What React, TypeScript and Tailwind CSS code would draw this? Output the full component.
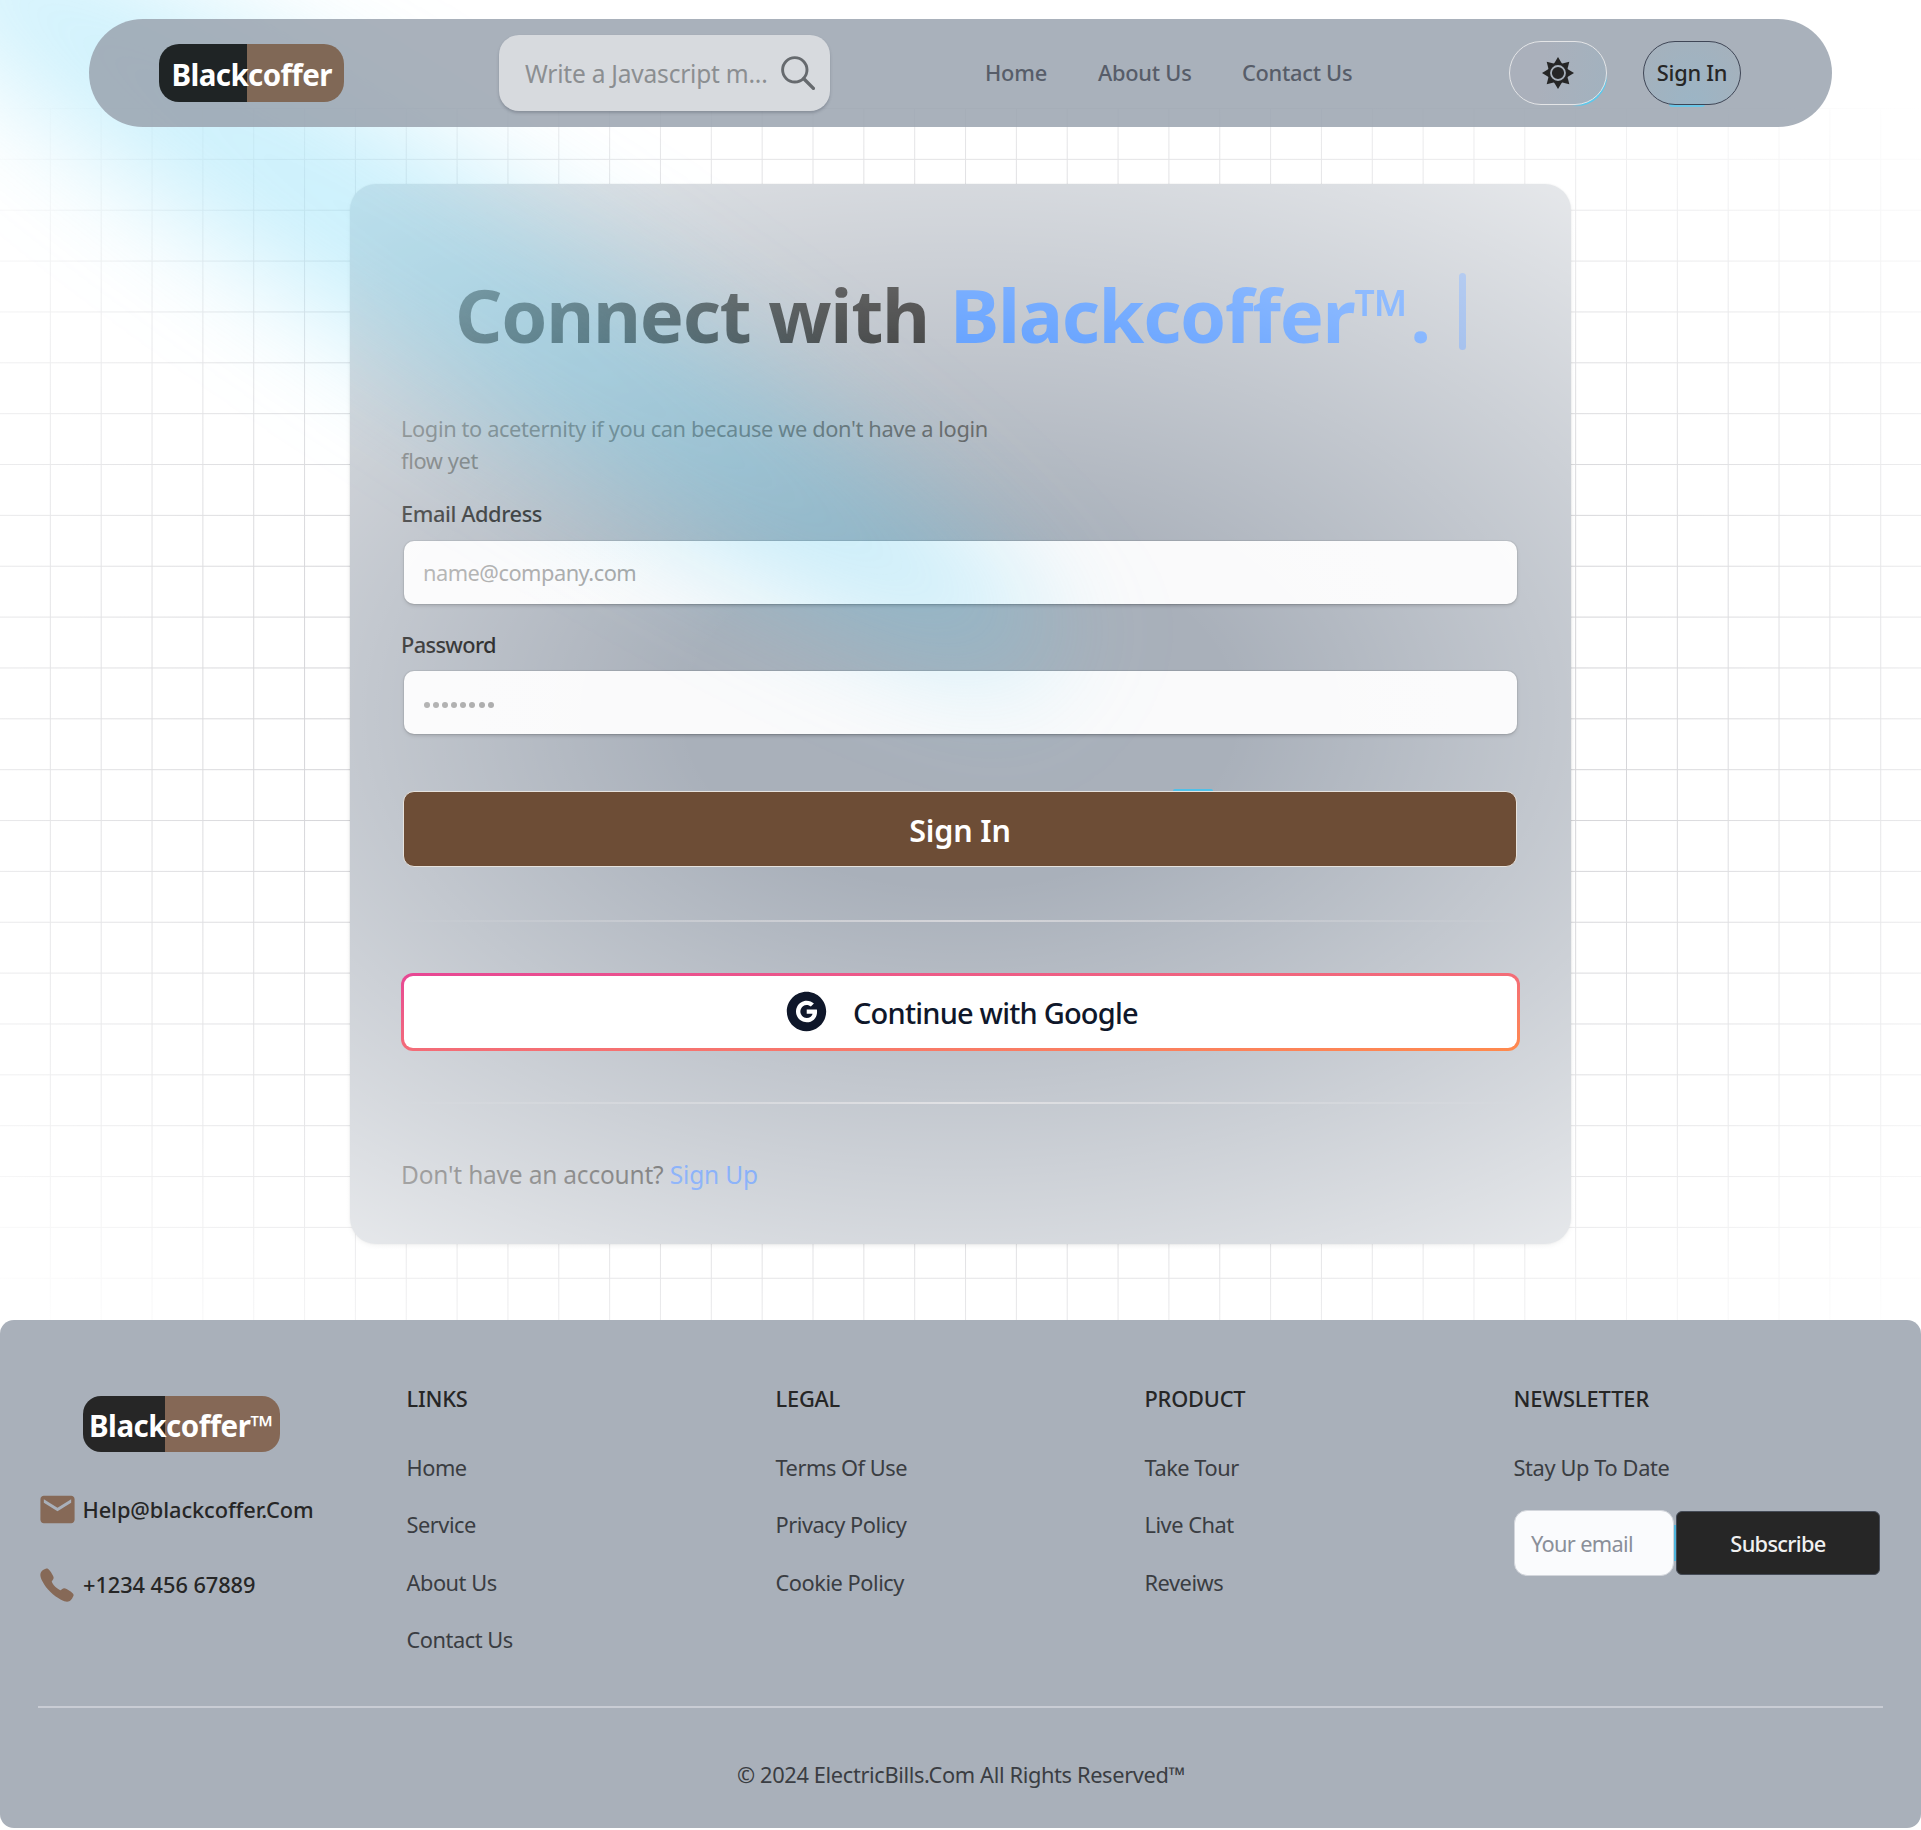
import React from "react";
import { AiFillGoogleCircle } from "react-icons/ai";
import { IoCall } from "react-icons/io5";
import { MdEmail } from "react-icons/md";

const SearchIcon = () => (
  <svg viewBox="0 0 34 34" className="h-[34px] w-[34px] shrink-0" fill="none" stroke="#666a6e">
    <circle cx="13.8" cy="13.8" r="12.2" strokeWidth="2.9" />
    <path d="M22.8 22.8 32.4 32.4" strokeWidth="3.4" strokeLinecap="round" />
  </svg>
);

const SunIcon = () => (
  <svg viewBox="-16 -16 32 32" className="h-8 w-8" fill="#262626">
    {[0, 45, 90, 135, 180, 225, 270, 315].map((a) => (
      <path key={a} d="M-4.2 -9 0 -16 4.2 -9z" transform={`rotate(${a})`} />
    ))}
    <circle r="10.2" />
    <circle r="7" fill="none" stroke="#a7b0ba" strokeWidth="1.8" />
  </svg>
);

const Navbar = () => (
  <nav className="relative z-30 mx-[89px] mt-[19px] flex h-[108px] items-center rounded-full bg-[#9aa3af]/85">
    <div className="ml-[70px] h-[58px] w-[185px] rounded-[20px] bg-[linear-gradient(90deg,#1f2425_88px,#806856_88px)] pt-[2px] pl-[12.5px] text-[29.5px] leading-[58px] font-bold tracking-[-0.6px] text-white">
      Blackcoffer
    </div>
    <div className="ml-[155px] flex h-[76px] w-[331px] items-center rounded-[20px] bg-[#d7dade] pl-[26px] shadow-[0_2px_3px_rgba(60,66,80,0.3)]">
      <span className="w-[256px] pt-[2px] text-[24.5px] tracking-[-0.22px] whitespace-nowrap text-[#8b8e91]">Write a Javascript m...</span>
      <SearchIcon />
    </div>
    <div className="ml-[155px] flex pt-px text-[21.8px] font-medium text-[#575d69]">
      <a className="w-[113px] tracking-[-0.2px]">Home</a>
      <a className="w-[144px] tracking-[-0.25px]">About Us</a>
      <a className="w-[267px] tracking-[-0.28px]">Contact Us</a>
    </div>
    <button className="relative h-16 w-[98px]">
      <span className="absolute inset-0 translate-x-[0.5px] translate-y-[1.5px] rounded-full bg-[radial-gradient(circle_at_92px_60px,#5bc8ec_0,#5bc8ec_18px,transparent_30px)]" />
      <span className="absolute inset-0 flex items-center justify-center rounded-full border border-[#e4e5e7] bg-[linear-gradient(100deg,#aab0bb_35%,#a2b2bf)]">
        <SunIcon />
      </span>
    </button>
    <button className="relative ml-9 h-16 w-[98px]">
      <span className="absolute -bottom-[2px] left-[26px] h-[6px] w-[36px] rounded-[4px] bg-[#6cc6e6]" />
      <span className="absolute inset-0 flex items-center justify-center rounded-full border border-[#3f4656] bg-[radial-gradient(ellipse_at_50%_110%,#9bb5c6,#a5b1bc_90%)] pt-px text-[21.8px] font-medium tracking-[-0.25px] text-[#262626]">
        Sign In
      </span>
    </button>
  </nav>
);

const Divider = () => <div className="h-[2px] w-[1119px] bg-[linear-gradient(90deg,transparent,#d4d4d8,transparent)]" />;

const field =
  "ml-[3px] flex h-[63px] w-[1113px] items-center rounded-[10px] bg-[#fafafb] shadow-[0_2px_4px_-1px_rgba(0,0,0,0.3),0_0_0_1px_rgba(25,28,33,0.1)]";

const LoginCard = () => (
  <div className="mx-auto mt-[57px] h-[1060px] w-[1221px] rounded-[26px] bg-[#a9b0ba] px-[51px] pt-[84px] shadow-[0_2px_4px_rgba(0,0,0,0.14),0_0_0_1px_rgba(25,28,33,0.06)]">
    <h1 className="flex h-[90px] pl-[54px] text-[74px] leading-[93px] font-bold whitespace-nowrap">
      <span className="w-[495px] tracking-[-1.3px] text-black">Connect with</span>
      <span className="w-[509px] tracking-[-1.3px] text-blue-500">
        Blackcoffer<span className="inline-block w-[56px] origin-left scale-x-[0.96]">™</span>.
      </span>
      <span className="mt-[5px] h-[77px] w-[7px] rounded-sm bg-[#5d8fe0]" />
    </h1>
    <p className="mt-[55px] text-[21.8px] leading-8 tracking-[-0.37px] text-[#4d4d4d]">
      Login to aceternity if you can because we don't have a login
      <br />
      flow yet
    </p>
    <div className="mt-[21px] h-8 text-[21.8px] leading-8 font-medium tracking-[-0.42px] text-black">Email Address</div>
    <div className={`${field} mt-[11px]`}>
      <span className="pt-[2px] pl-[19px] text-[21.8px] tracking-[-0.5px] text-[#9c9c9c]">name@company.com</span>
    </div>
    <div className="mt-[25px] h-8 text-[21.8px] leading-8 font-medium tracking-[-0.65px] text-black">Password</div>
    <div className={`${field} mt-[10px] gap-[3.1px] pl-[20px]`}>
      {[0, 1, 2, 3, 4, 5, 6, 7].map((i) => (
        <span key={i} className="mt-[4px] h-[6px] w-[6px] rounded-full bg-[#9c9c9c]" />
      ))}
    </div>
    <div className="relative z-20 mt-[57px] ml-[2px] w-[1114px]">
      <span className="absolute -top-[2px] left-[770px] h-[4px] w-[40px] rounded-full bg-[#4fc0e8]" />
      <button className="relative h-[76px] w-full rounded-[11px] border border-[#e6e2dd] bg-[#6d4d36] pt-[2px] text-[30.5px] leading-[73px] font-semibold tracking-[-0.15px] text-white">
        Sign In
      </button>
    </div>
    <div className="mt-[53px]">
      <Divider />
    </div>
    <div className="relative z-20 mt-[51px] h-[78px] w-[1119px] rounded-xl bg-linear-to-br from-[#e74694] to-[#ff8a4c] p-[3px]">
      <button className="flex h-full w-full items-center rounded-[9px] bg-white pl-[380px] text-[29px] font-medium text-[#0f172a]">
        <AiFillGoogleCircle className="-mt-px h-[45px] w-[45px]" />
        <span className="ml-[24px] pt-px tracking-[-0.8px]">Continue with Google</span>
      </button>
    </div>
    <div className="mt-[51px]">
      <Divider />
    </div>
    <p className="mt-[53px] text-[24.5px] leading-9 tracking-[-0.2px] text-[#171717]">
      Don't have an account? <a className="tracking-[-0.15px] text-[#2a72f5]">Sign Up</a>
    </p>
  </div>
);

const columns = [
  { title: "LINKS", items: ["Home", "Service", "About Us", "Contact Us"] },
  { title: "LEGAL", items: ["Terms Of Use", "Privacy Policy", "Cookie Policy"] },
  { title: "PRODUCT", items: ["Take Tour", "Live Chat", "Reveiws"] },
];

const Footer = () => (
  <footer className="relative z-30 mt-[76px] h-[508px] rounded-[14px] bg-[#a9b0ba] px-9 text-[21.8px] leading-8 text-[#3a3d42]">
    <div className="grid h-[386px] w-[1845px] grid-cols-5">
      <div className="pt-[76px] font-medium text-[#262626]">
        <div className="ml-[47px] h-14 w-[197px] rounded-[18px] bg-[linear-gradient(90deg,#262626_82px,#856856_82px)] pt-[2px] pl-[6px] text-[29.5px] leading-[56px] font-bold tracking-[-0.5px] text-white">
          Blackcoffer™
        </div>
        <div className="mt-[37px] flex h-[41px] items-center">
          <MdEmail className="ml-[0.5px] h-[41px] w-[41px] text-[#866957]" />
          <span className="ml-[5px] tracking-[-0.1px]">Help@blackcoffer.Com</span>
        </div>
        <div className="mt-[34px] flex h-[41px] items-center">
          <IoCall className="mx-[2px] h-[38px] w-[38px] text-[#866957]" />
          <span className="ml-[5px] tracking-[-0.07px]">+1234 456 67889</span>
        </div>
      </div>
      {columns.map((c) => (
        <div key={c.title} className="pt-[63px] pl-[1.5px]">
          <div className="mb-[37px] h-8 font-medium tracking-[-0.2px] text-[#262626]">{c.title}</div>
          <ul className="flex flex-col gap-[25.3px] tracking-[-0.47px]">
            {c.items.map((i) => (
              <li key={i}>{i}</li>
            ))}
          </ul>
        </div>
      ))}
      <div className="pt-[63px]">
        <div className="h-8 pl-[1.5px] font-medium tracking-[-0.05px] text-[#262626]">NEWSLETTER</div>
        <div className="mt-[37px] h-8 pl-[1.5px] tracking-[-0.38px]">Stay Up To Date</div>
        <div className="mt-[26px] ml-[2px] flex items-center">
          <div className="flex h-[66px] w-40 items-center rounded-[13px] border border-[#d3d6dc] bg-[#fafbfd] pt-px pl-4 tracking-[-0.68px] text-[#8a8f99]">
            Your email
          </div>
          <div className="h-9 w-[2px] bg-[#4fb6dd]" />
          <button className="h-16 w-[204px] rounded-md border border-[#454b56] bg-[#262626] pt-px font-medium tracking-[-0.7px] text-[#f0f0f0]">
            Subscribe
          </button>
        </div>
      </div>
    </div>
    <div className="ml-[2px] h-[2px] w-[1845px] bg-[#c9ccd4]" />
    <p className="mt-[51px] pl-px text-center tracking-[-0.36px]">© 2024 ElectricBills.Com All Rights Reserved™</p>
  </footer>
);

export default function App() {
  return (
    <div className="relative flex h-[1830px] w-full flex-col overflow-hidden bg-white font-['Noto_Sans',sans-serif]">
      {/* grid backdrop */}
      <div className="absolute inset-x-0 top-[108px] h-[1212px] bg-[linear-gradient(to_right,#bfbfc4_1.3px,transparent_1.3px),linear-gradient(to_bottom,#bfbfc4_1.3px,transparent_1.3px)] bg-[size:50.85px_50.87px] bg-[position:-1px_0px]" />
      {/* radial fade */}
      <div className="pointer-events-none absolute inset-x-0 top-[108px] z-10 h-[1212px] bg-[radial-gradient(ellipse_at_center,rgba(255,255,255,0)_20%,#fff_100%)]" />
      {/* spotlight beam */}
      <div className="pointer-events-none absolute top-[186px] left-[-235px] z-[15] h-[200px] w-[1400px] rotate-[33deg] rounded-[50%] bg-[#48cdf5]/29 blur-[60px]" />
      <Navbar />
      <div className="relative">
        <LoginCard />
      </div>
      <Footer />
    </div>
  );
}
